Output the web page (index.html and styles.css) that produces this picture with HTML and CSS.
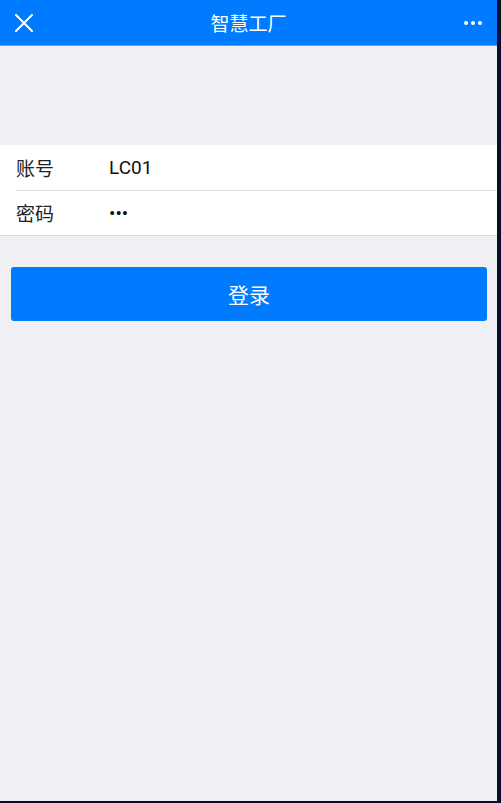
FILE: index.html
```html
<!DOCTYPE html>
<html lang="zh-CN">
<head>
    <meta charset="UTF-8">
    <meta name="viewport" content="width=device-width, initial-scale=1.0">
    <title>智慧工厂</title>
    <link rel="stylesheet" href="styles.css">
</head>
<body>
    <div id="app">
        <header class="nav-bar">
            <button class="nav-btn nav-close" aria-label="关闭">
                <svg width="18" height="18" viewBox="0 0 18 18">
                    <path d="M1 1 L17 17 M17 1 L1 17" stroke="#fff" stroke-width="2" stroke-linecap="round" fill="none"/>
                </svg>
            </button>
            <h1 class="nav-title">智慧工厂</h1>
            <button class="nav-btn nav-more" aria-label="更多">
                <span class="dot"></span><span class="dot"></span><span class="dot"></span>
            </button>
        </header>

        <form class="login-form" onsubmit="return false;">
            <div class="form-group">
                <div class="form-row">
                    <label for="account">账号</label>
                    <input id="account" type="text" value="LC01">
                </div>
                <div class="form-row">
                    <label for="password">密码</label>
                    <input id="password" type="password" value="123">
                </div>
            </div>
            <div class="form-actions">
                <button type="submit" class="btn-login">登录</button>
            </div>
        </form>
    </div>
</body>
</html>
```

FILE: styles.css
```css
html {
    background-color: #0d0c2b;
}
body {
    margin: 0;
    font-family: 'Noto Sans', 'Noto Sans CJK SC', sans-serif;
    color: #000;
}
#app {
    width: 497px;
    height: 801px;
    background-color: #efeff4;
    overflow: hidden;
}
.nav-bar {
    display: flex;
    align-items: center;
    justify-content: space-between;
    height: 45px;
    background-color: #007aff;
    border-bottom: 1px solid #5aa6ff;
    padding: 0 14px 0 14px;
}
.nav-btn {
    display: flex;
    align-items: center;
    justify-content: center;
    background: none;
    border: none;
    padding: 0;
    width: 20px;
    height: 20px;
    cursor: pointer;
}
.nav-close svg {
    display: block;
}
.nav-more {
    gap: 3px;
    width: 20px;
}
.dot {
    width: 4px;
    height: 4px;
    border-radius: 50%;
    background-color: #fff;
}
.nav-title {
    margin: 0;
    font-size: 19px;
    font-weight: normal;
    color: #fff;
}
.login-form {
    margin-top: 99px;
}
.form-group {
    background-color: #fff;
    border-bottom: 1px solid #dcdcdc;
}
.form-row {
    display: flex;
    align-items: center;
    box-sizing: border-box;
    height: 45px;
    margin-left: 16px;
}
.form-row + .form-row {
    border-top: 1px solid #e2e2e2;
}
.form-row label {
    width: 93px;
    font-size: 19px;
    color: #222;
}
.form-row input {
    flex: 1;
    border: none;
    outline: none;
    padding: 0;
    font-family: 'Roboto', 'Noto Sans CJK SC', sans-serif;
    font-size: 19px;
    color: #111;
    background: transparent;
}
.form-actions {
    padding: 31px 10px 0 11px;
}
.btn-login {
    display: block;
    width: 100%;
    height: 54px;
    border: none;
    border-radius: 3px;
    background-color: #007aff;
    color: #fff;
    font-family: 'Noto Sans CJK SC', sans-serif;
    font-size: 21px;
    cursor: pointer;
}
```
